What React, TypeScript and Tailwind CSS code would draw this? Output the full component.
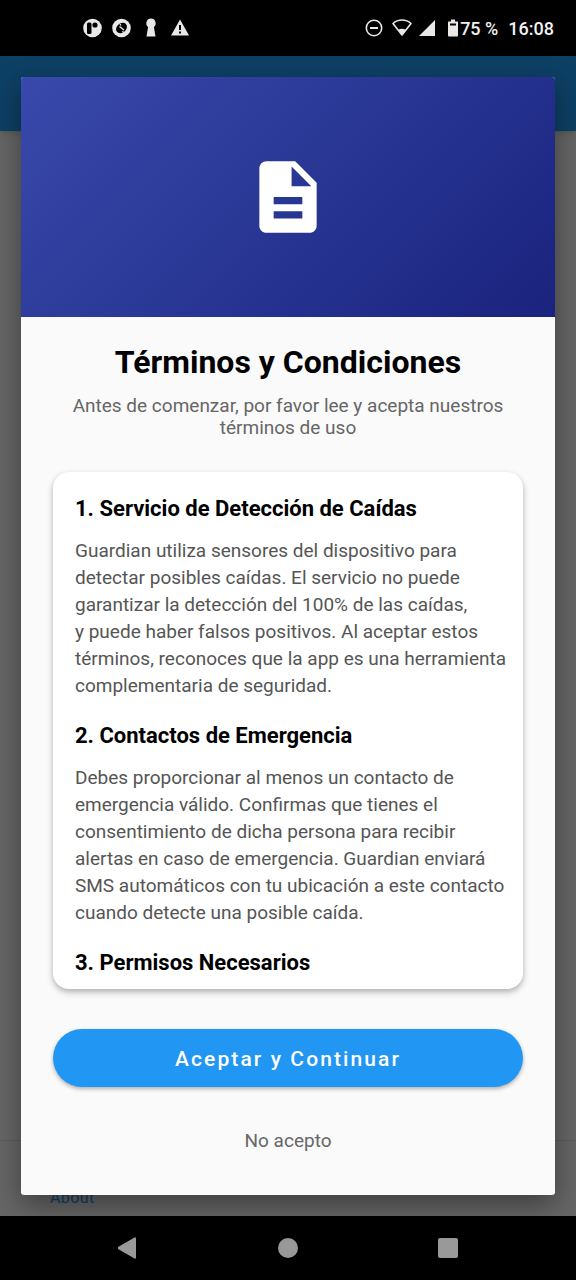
import type { ReactNode } from "react";
import { MdDescription } from "react-icons/md";

const sections = [
  {
    title: "1. Servicio de Detección de Caídas",
    body: "Guardian utiliza sensores del dispositivo para detectar posibles caídas. El servicio no puede garantizar la detección del 100% de las caídas, y\u00a0puede haber falsos positivos. Al aceptar estos términos, reconoces que la app es una herramienta complementaria de seguridad.",
  },
  {
    title: "2. Contactos de Emergencia",
    body: "Debes proporcionar al menos un contacto de emergencia válido. Confirmas que tienes el consentimiento de dicha persona para recibir alertas en caso de emergencia. Guardian enviará SMS automáticos con tu ubicación a este contacto cuando detecte una posible caída.",
  },
  { title: "3. Permisos Necesarios" },
];

function StatusIcon({ width = 20, children }: { width?: number; children: ReactNode }) {
  return (
    <svg width={width} height="20" viewBox={`0 0 ${width} 20`} fill="#e8e8e8" aria-hidden="true">
      {children}
    </svg>
  );
}

function StatusBar() {
  return (
    <header className="flex h-14 shrink-0 items-center justify-between bg-black pr-[22px] pl-[83px] text-[#f0f0f0]">
      <div className="flex items-center gap-[9px]">
        <StatusIcon>
          <circle cx="9.500" cy="10" r="9.300" />
          <rect x="4" y="4.500" width="4.500" height="11.500" rx="1.500" fill="#000" />
          <circle cx="12" cy="7" r="2.600" fill="#000" />
        </StatusIcon>
        <StatusIcon>
          <circle cx="9.500" cy="10" r="9.300" />
          <ellipse cx="9.500" cy="10" rx="6" ry="4.600" transform="rotate(-40 9.500 10)" fill="#000" />
          <path d="M7.500 8.500 12 12M8 6 9 7.500M10.500 13 11.500 14.500" stroke="#e8e8e8" strokeWidth="1.300" />
        </StatusIcon>
        <StatusIcon>
          <path d="M10 0.500a4.800 4.800 0 0 1 2.900 8.500L14.500 18.500h-9L7.100 9A4.800 4.800 0 0 1 10 .500z" />
        </StatusIcon>
        <StatusIcon>
          <path d="M10 1.500 19 17.500H1z" />
          <path d="M9 7h2v5H9zM9 13.500h2v2H9z" fill="#000" />
        </StatusIcon>
      </div>
      <div className="flex items-center">
        <StatusIcon>
          <circle cx="10" cy="10" r="7.700" fill="none" stroke="#e8e8e8" strokeWidth="1.600" />
          <path d="M6 9h8v2H6z" />
        </StatusIcon>
        <span className="ml-2 flex">
          <StatusIcon>
            <path d="M1 5.500C6 .800 14 .800 19 5.500L10 17z" fill="none" stroke="#e8e8e8" strokeWidth="1.600" strokeLinejoin="round" />
            <path d="M6 12Q10 9.500 14 12L10 17z" />
          </StatusIcon>
        </span>
        <span className="ml-[6px] flex">
          <StatusIcon width={18}>
            <path d="M17 2v16H1z" />
          </StatusIcon>
        </span>
        <span className="ml-[10px] flex">
          <StatusIcon width={14}>
            <path d="M5 1.500h4v2h2.500q.500 0 .500.500v13.500q0 1-1 1H3q-1 0-1-1V4q0-.500.500-.500H5z" />
            <path d="M4 5.500h6v2H4z" fill="#000" />
          </StatusIcon>
        </span>
        <span className="text-[18px] font-medium">75 %</span>
        <span className="ml-[10px] text-[18px] font-medium">16:08</span>
      </div>
    </header>
  );
}

function Backdrop() {
  return (
    <div className="absolute inset-0 flex flex-col justify-between bg-[#666666]" aria-hidden="true">
      <div className="h-[75px] bg-[#0d4065] shadow-md" />
      <div className="h-[76px] border-t border-[#5c5c5c] pt-[45px] pl-[50px] text-[16px] leading-6 tracking-wide text-[#0d4065]">
        About
      </div>
    </div>
  );
}

function TermsDialog() {
  return (
    <section
      role="dialog"
      aria-labelledby="terms-title"
      className="relative m-[21px] flex min-h-0 flex-1 flex-col overflow-hidden rounded-[3px] bg-[#fafafa] shadow-[0_10px_28px_rgba(0,0,0,0.4)]"
    >
      <div className="flex h-60 shrink-0 items-center justify-center bg-linear-135 from-[#3949ab] to-[#1a237e]">
        <MdDescription className="size-[86px] text-white" aria-hidden="true" />
      </div>
      <div className="flex min-h-0 flex-1 flex-col px-8 pt-[25px] pb-[30px]">
        <h1 id="terms-title" className="text-center text-[32px] leading-10 font-bold text-black">
          Términos y Condiciones
        </h1>
        <p className="mt-[13px] text-center text-[19px] leading-[22px] text-[#666666]">
          Antes de comenzar, por favor lee y acepta nuestros términos de uso
        </p>
        <div className="mt-[33px] flex min-h-0 flex-1 flex-col gap-[23px] overflow-y-auto rounded-2xl bg-white pt-[23px] pr-4 pl-[22px] shadow-[0_3px_6px_rgba(0,0,0,0.3)]">
          {sections.map((section) => (
            <article key={section.title}>
              <h2 className="text-[22px] leading-7 font-bold text-black">{section.title}</h2>
              {section.body && (
                <p className="mt-[14px] text-[19px] leading-[27px] text-[#555555]">{section.body}</p>
              )}
            </article>
          ))}
        </div>
        <button
          type="button"
          className="mt-10 h-[58px] shrink-0 rounded-full bg-[#2196f3] pt-[3px] text-[21px] font-medium tracking-widest text-white shadow-[0_2px_4px_rgba(0,0,0,0.3)]"
        >
          Aceptar y Continuar
        </button>
        <button type="button" className="mt-[30px] h-12 shrink-0 text-[19px] text-[#666666]">
          No acepto
        </button>
      </div>
    </section>
  );
}

function NavigationBar() {
  return (
    <nav className="flex h-16 shrink-0 items-center justify-around bg-black px-12">
      <button type="button" aria-label="Atrás" className="flex">
        <svg width="20" height="24" viewBox="0 0 20 24" fill="#999999">
          <path d="M16.500 1.500Q18 .800 18 2.500V21.500Q18 23.200 16.500 22.500L0 13Q-1.500 12 0 11z" />
        </svg>
      </button>
      <button type="button" aria-label="Inicio" className="size-5 rounded-full bg-[#999999]" />
      <button type="button" aria-label="Recientes" className="size-5 rounded-[2px] bg-[#999999]" />
    </nav>
  );
}

export default function App() {
  return (
    <div className="flex h-screen flex-col bg-black font-[Roboto,sans-serif]">
      <StatusBar />
      <main className="relative flex min-h-0 flex-1 flex-col overflow-hidden">
        <Backdrop />
        <TermsDialog />
      </main>
      <NavigationBar />
    </div>
  );
}
